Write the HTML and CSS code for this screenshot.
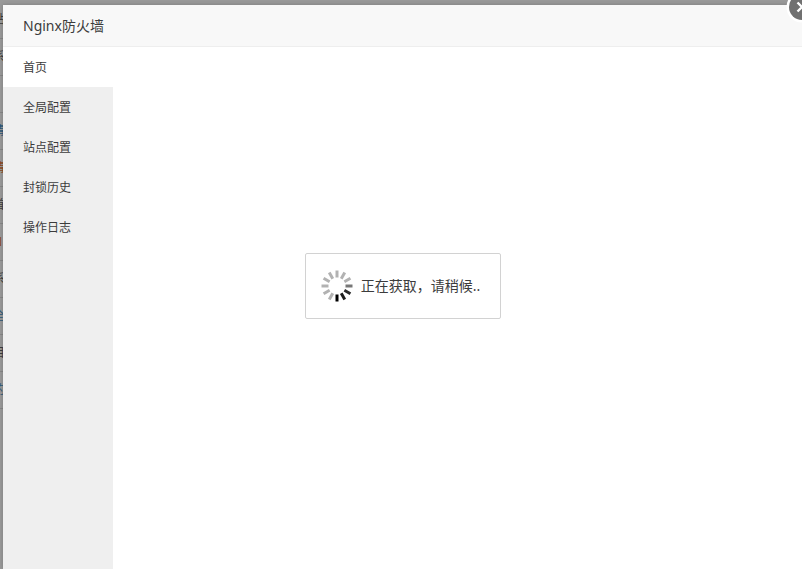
FILE: index.html
```html
<!DOCTYPE html>
<html lang="zh-CN">
<head>
<meta charset="utf-8">
<title>Nginx防火墙</title>
<link rel="stylesheet" href="styles.css">
</head>
<body>
<ul class="backdrop" aria-hidden="true">
  <li>站</li><li>系</li><li></li><li class="link">清</li><li class="warm">清</li><li>首</li><li class="warm">N</li><li>系</li><li class="link">全</li><li>目</li><li class="link">的</li>
</ul>
<main class="window">
  <header class="title-bar"><h1>Nginx防火墙</h1></header>
  <div class="body">
    <nav class="tabs">
      <button class="tab active" type="button">首页</button>
      <button class="tab" type="button">全局配置</button>
      <button class="tab" type="button">站点配置</button>
      <button class="tab" type="button">封锁历史</button>
      <button class="tab" type="button">操作日志</button>
    </nav>
    <section class="content"></section>
  </div>
</main>
<button class="close" type="button" aria-label="关闭">
  <svg width="32" height="32" viewBox="0 0 32 32">
    <circle cx="16" cy="16" r="15.500" fill="#fff"/>
    <circle cx="16" cy="16" r="13" fill="#707070"/>
    <path d="M11.500 11.500l9 9M20.500 11.500l-9 9" stroke="#fff" stroke-width="2.400"/>
  </svg>
</button>
<div class="loading-layer">
  <div class="loading" role="status">
    <svg width="32" height="32" viewBox="-16 -16 32 32" stroke="#b2b2b2" stroke-width="3">
      <path d="M0-8.500V-15.500"/>
      <path d="M0-8.500V-15.500" transform="rotate(30)"/>
      <path d="M0-8.500V-15.500" transform="rotate(60)"/>
      <path d="M0-8.500V-15.500" transform="rotate(90)" stroke="#777"/>
      <path d="M0-8.500V-15.500" transform="rotate(120)" stroke="#2b2b2b"/>
      <path d="M0-8.500V-15.500" transform="rotate(150)" stroke="#1c1c1c"/>
      <path d="M0-8.500V-15.500" transform="rotate(180)" stroke="#000"/>
      <path d="M0-8.500V-15.500" transform="rotate(210)"/>
      <path d="M0-8.500V-15.500" transform="rotate(240)"/>
      <path d="M0-8.500V-15.500" transform="rotate(270)"/>
      <path d="M0-8.500V-15.500" transform="rotate(300)"/>
      <path d="M0-8.500V-15.500" transform="rotate(330)"/>
    </svg>
    <span>正在获取，请稍候..</span>
  </div>
</div>
</body>
</html>
```
FILE: styles.css
```css
* { box-sizing: border-box; }

body {
  margin: 0;
  min-height: 100vh;
  display: flex;
  padding: 5px 0 0 3px;
  background: #999;
  color: #3c3c3c;
  font: 12px/20px "Noto Sans", "Noto Sans CJK SC", sans-serif;
  overflow: hidden;
}

.backdrop {
  position: absolute;
  top: 2px;
  left: 0;
  width: 3px;
  margin: 0;
  padding: 0;
  list-style: none;
  overflow: hidden;
}

.backdrop li {
  height: 37px;
  border-bottom: 1px solid #868686;
  line-height: 36px;
  text-indent: -7px;
  white-space: nowrap;
}

.backdrop .link { color: #2c5777; }
.backdrop .warm { color: #8a4a20; }

.window {
  flex: 1;
  display: flex;
  flex-direction: column;
  background: #fff;
  box-shadow: 0 0 4px rgba(0, 0, 0, .2);
  position: relative;
}

.title-bar {
  height: 42px;
  padding: 0 20px;
  background: #f8f8f8;
  border-bottom: 1px solid #eee;
}

.title-bar h1 {
  margin: 0;
  font-size: 14px;
  font-weight: 400;
  line-height: 42px;
}

.body {
  flex: 1;
  display: flex;
}

.tabs {
  width: 110px;
  background: #efefef;
}

.tab {
  display: block;
  width: 100%;
  height: 40px;
  padding: 2px 20px 0;
  border: 0;
  background: none;
  color: inherit;
  font: inherit;
  text-align: left;
}

.tab.active { background: #fff; }

.content { flex: 1; }

.close {
  position: absolute;
  top: -9px;
  right: -16px;
  padding: 0;
  border: 0;
  background: none;
}

.close svg { display: block; }

.loading-layer {
  position: fixed;
  inset: 3px 0 0 4px;
  display: grid;
  place-items: center;
}

.loading {
  display: flex;
  align-items: center;
  gap: 8px;
  height: 66px;
  padding: 0 20px 0 15px;
  border: 1px solid #d2d2d2;
  border-radius: 2px;
  background: #fff;
  font-size: 14px;
}
```
